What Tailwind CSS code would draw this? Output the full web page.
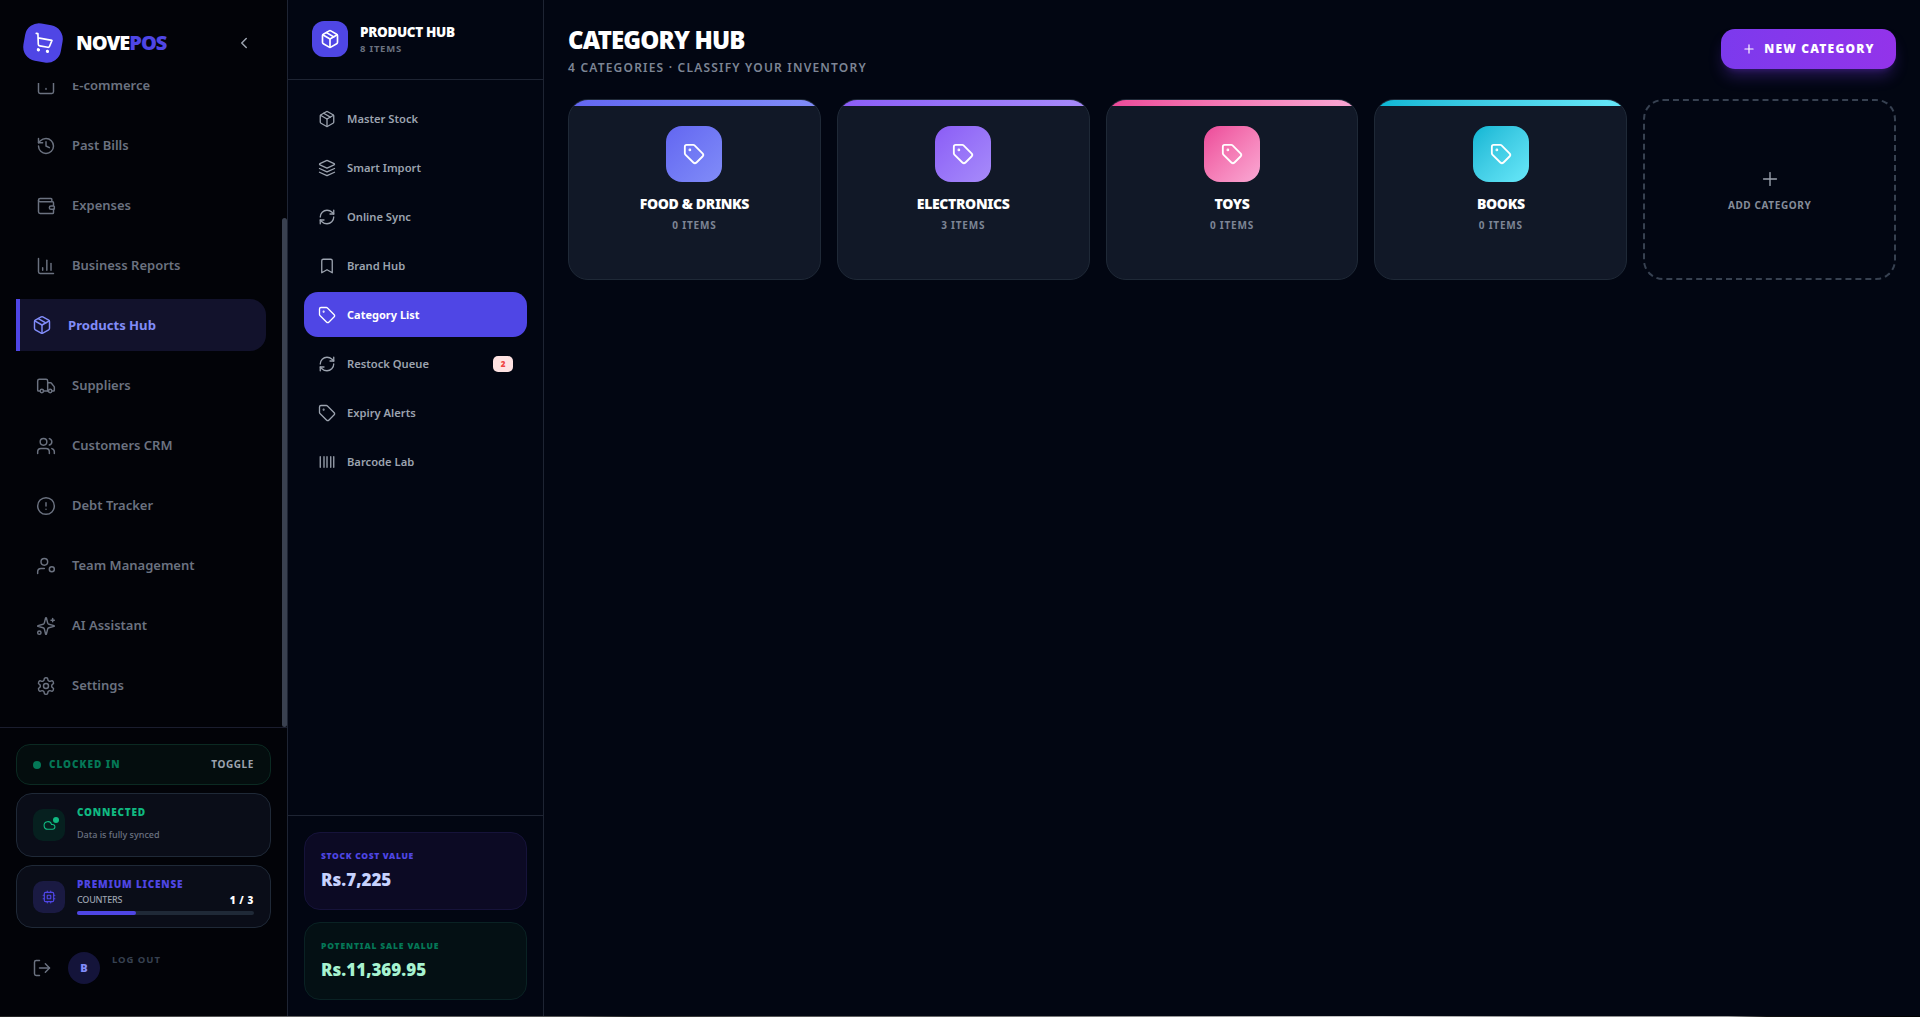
<!DOCTYPE html>
<html lang="en">
<head>
  <meta charset="UTF-8" />
  <title>NovePOS - Category Hub</title>
  <script src="https://cdn.jsdelivr.net/npm/@tailwindcss/browser@4"></script>
</head>
<body class="h-[1017px] overflow-hidden bg-[#020612] font-['Noto_Sans',sans-serif] text-white">
  <!-- icon sprites -->
  <svg class="hidden" xmlns="http://www.w3.org/2000/svg">
    <symbol id="i-cart" viewBox="0 0 24 24"><circle cx="8" cy="21" r="1"/><circle cx="19" cy="21" r="1"/><path d="M2.05 2.05h2l2.66 12.42a2 2 0 0 0 2 1.58h9.78a2 2 0 0 0 1.95-1.57l1.65-7.43H5.12"/></symbol>
    <symbol id="i-chevron" viewBox="0 0 24 24"><path d="m15 18-6-6 6-6"/></symbol>
    <symbol id="i-monitor" viewBox="0 0 24 24"><rect x="3" y="3" width="18" height="18" rx="2"/><path d="M12 16v-1"/></symbol>
    <symbol id="i-history" viewBox="0 0 24 24"><path d="M3 12a9 9 0 1 0 9-9 9.75 9.75 0 0 0-6.74 2.74L3 8"/><path d="M3 3v5h5"/><path d="M12 7v5l4 2"/></symbol>
    <symbol id="i-wallet" viewBox="0 0 24 24"><path d="M19 7V4a1 1 0 0 0-1-1H5a2 2 0 0 0 0 4h15a1 1 0 0 1 1 1v4h-3a2 2 0 0 0 0 4h3a1 1 0 0 0 1-1v-2a1 1 0 0 0-1-1"/><path d="M3 5v14a2 2 0 0 0 2 2h15a1 1 0 0 0 1-1v-4"/></symbol>
    <symbol id="i-chart" viewBox="0 0 24 24"><path d="M3 3v16a2 2 0 0 0 2 2h16"/><path d="M18 17V9"/><path d="M13 17V5"/><path d="M8 17v-3"/></symbol>
    <symbol id="i-package" viewBox="0 0 24 24"><path d="m7.5 4.27 9 5.15"/><path d="M21 8a2 2 0 0 0-1-1.73l-7-4a2 2 0 0 0-2 0l-7 4A2 2 0 0 0 3 8v8a2 2 0 0 0 1 1.73l7 4a2 2 0 0 0 2 0l7-4A2 2 0 0 0 21 16Z"/><path d="m3.3 7 8.7 5 8.7-5"/><path d="M12 22V12"/></symbol>
    <symbol id="i-truck" viewBox="0 0 24 24"><path d="M14 18V6a2 2 0 0 0-2-2H4a2 2 0 0 0-2 2v11a1 1 0 0 0 1 1h2"/><path d="M15 18H9"/><path d="M19 18h2a1 1 0 0 0 1-1v-3.65a1 1 0 0 0-.22-.624l-3.48-4.35A1 1 0 0 0 17.52 8H14"/><circle cx="17" cy="18" r="2"/><circle cx="7" cy="18" r="2"/></symbol>
    <symbol id="i-users" viewBox="0 0 24 24"><path d="M16 21v-2a4 4 0 0 0-4-4H6a4 4 0 0 0-4 4v2"/><circle cx="9" cy="7" r="4"/><path d="M22 21v-2a4 4 0 0 0-3-3.87"/><path d="M16 3.13a4 4 0 0 1 0 7.75"/></symbol>
    <symbol id="i-alert" viewBox="0 0 24 24"><circle cx="12" cy="12" r="10"/><path d="M12 8v4"/><path d="M12 16h.01"/></symbol>
    <symbol id="i-usercog" viewBox="0 0 24 24"><path d="M10 15H6a4 4 0 0 0-4 4v2"/><circle cx="10" cy="7" r="4"/><circle cx="19" cy="16" r="3"/></symbol>
    <symbol id="i-sparkles" viewBox="0 0 24 24"><path d="M9.937 15.5A2 2 0 0 0 8.5 14.063l-6.135-1.582a.5.5 0 0 1 0-.962L8.5 9.936A2 2 0 0 0 9.937 8.5l1.582-6.135a.5.5 0 0 1 .963 0L14.063 8.5A2 2 0 0 0 15.5 9.937l6.135 1.581a.5.5 0 0 1 0 .964L15.5 14.063a2 2 0 0 0-1.437 1.437l-1.582 6.135a.5.5 0 0 1-.963 0z"/><path d="M20 3v4"/><path d="M22 5h-4"/><circle cx="4" cy="20" r="2"/></symbol>
    <symbol id="i-settings" viewBox="0 0 24 24"><path d="M12.22 2h-.44a2 2 0 0 0-2 2v.18a2 2 0 0 1-1 1.73l-.43.25a2 2 0 0 1-2 0l-.15-.08a2 2 0 0 0-2.73.73l-.22.38a2 2 0 0 0 .73 2.73l.15.1a2 2 0 0 1 1 1.72v.51a2 2 0 0 1-1 1.74l-.15.09a2 2 0 0 0-.73 2.73l.22.38a2 2 0 0 0 2.73.73l.15-.08a2 2 0 0 1 2 0l.43.25a2 2 0 0 1 1 1.73V20a2 2 0 0 0 2 2h.44a2 2 0 0 0 2-2v-.18a2 2 0 0 1 1-1.73l.43-.25a2 2 0 0 1 2 0l.15.08a2 2 0 0 0 2.73-.73l.22-.39a2 2 0 0 0-.73-2.73l-.15-.08a2 2 0 0 1-1-1.74v-.5a2 2 0 0 1 1-1.74l.15-.09a2 2 0 0 0 .73-2.73l-.22-.38a2 2 0 0 0-2.73-.73l-.15.08a2 2 0 0 1-2 0l-.43-.25a2 2 0 0 1-1-1.73V4a2 2 0 0 0-2-2z"/><circle cx="12" cy="12" r="3"/></symbol>
    <symbol id="i-cloud" viewBox="0 0 24 24"><path d="M17.5 19H9a7 7 0 1 1 6.71-9h1.79a4.5 4.5 0 1 1 0 9Z"/></symbol>
    <symbol id="i-cpu" viewBox="0 0 24 24"><rect x="4" y="4" width="16" height="16" rx="2"/><rect x="9" y="9" width="6" height="6" rx="1"/><path d="M15 2v2M15 20v2M2 15h2M2 9h2M20 15h2M20 9h2M9 2v2M9 20v2"/></symbol>
    <symbol id="i-logout" viewBox="0 0 24 24"><path d="M9 21H5a2 2 0 0 1-2-2V5a2 2 0 0 1 2-2h4"/><path d="m16 17 5-5-5-5"/><path d="M21 12H9"/></symbol>
    <symbol id="i-layers" viewBox="0 0 24 24"><path d="M12.83 2.18a2 2 0 0 0-1.66 0L2.6 6.08a1 1 0 0 0 0 1.83l8.58 3.91a2 2 0 0 0 1.66 0l8.58-3.9a1 1 0 0 0 0-1.83Z"/><path d="m22 17.65-9.17 4.16a2 2 0 0 1-1.66 0L2 17.65"/><path d="m22 12.65-9.17 4.16a2 2 0 0 1-1.66 0L2 12.65"/></symbol>
    <symbol id="i-refresh" viewBox="0 0 24 24"><path d="M3 12a9 9 0 0 1 9-9 9.75 9.75 0 0 1 6.74 2.74L21 8"/><path d="M21 3v5h-5"/><path d="M21 12a9 9 0 0 1-9 9 9.75 9.75 0 0 1-6.74-2.74L3 16"/><path d="M8 16H3v5"/></symbol>
    <symbol id="i-bookmark" viewBox="0 0 24 24"><path d="m19 21-7-4-7 4V5a2 2 0 0 1 2-2h10a2 2 0 0 1 2 2v16z"/></symbol>
    <symbol id="i-tag" viewBox="0 0 24 24"><path d="M12.586 2.586A2 2 0 0 0 11.172 2H4a2 2 0 0 0-2 2v7.172a2 2 0 0 0 .586 1.414l8.704 8.704a2.426 2.426 0 0 0 3.42 0l6.58-6.58a2.426 2.426 0 0 0 0-3.42z"/><circle cx="7.5" cy="7.5" r=".5" fill="currentColor"/></symbol>
    <symbol id="i-barcode" viewBox="0 0 24 24"><path d="M3 5v14M8 5v14M12 5v14M17 5v14M21 5v14"/></symbol>
    <symbol id="i-plus" viewBox="0 0 24 24"><path d="M5 12h14"/><path d="M12 5v14"/></symbol>
  </svg>

  <div class="flex h-[1016px]">
    <!-- Main sidebar -->
    <aside class="flex w-[288px] shrink-0 flex-col border-r border-[#1e2433] bg-[#020308]">
      <header class="flex h-[83px] shrink-0 items-start pl-[24px] pr-[34px] pt-[24px]">
        <div class="flex size-[38px] rotate-[10deg] items-center justify-center rounded-[14px] bg-[#4f46e5]">
          <svg class="size-[20px] fill-none stroke-white stroke-2 [stroke-linecap:round] [stroke-linejoin:round]"><use href="#i-cart"/></svg>
        </div>
        <span class="ml-[14px] text-[20px] font-black leading-[38px] tracking-tighter text-white">NOVE<span class="text-[#4f46e5]">POS</span></span>
        <svg class="ml-auto mt-[10px] size-[18px] fill-none stroke-[#9ca3af] stroke-2 [stroke-linecap:round] [stroke-linejoin:round]"><use href="#i-chevron"/></svg>
      </header>

      <!-- scrolled nav -->
      <div class="relative h-[644px] shrink-0 overflow-hidden">
        <div class="absolute left-[282px] top-[135px] h-[509px] w-[5px] rounded-full bg-[#3a4150]"></div>
        <nav class="-mt-[28px] flex flex-col text-[13px] font-semibold text-[#6b7280] [&>a]:pt-[1px]">
          <a class="flex h-[60px] items-center gap-[16px] pl-[36px]"><svg class="size-[20px] shrink-0 fill-none stroke-current stroke-[1.75] [stroke-linecap:round] [stroke-linejoin:round]"><use href="#i-monitor"/></svg>E-commerce</a>
          <a class="flex h-[60px] items-center gap-[16px] pl-[36px]"><svg class="size-[20px] shrink-0 fill-none stroke-current stroke-[1.75] [stroke-linecap:round] [stroke-linejoin:round]"><use href="#i-history"/></svg>Past Bills</a>
          <a class="flex h-[60px] items-center gap-[16px] pl-[36px]"><svg class="size-[20px] shrink-0 fill-none stroke-current stroke-[1.75] [stroke-linecap:round] [stroke-linejoin:round]"><use href="#i-wallet"/></svg>Expenses</a>
          <a class="flex h-[60px] items-center gap-[16px] pl-[36px]"><svg class="size-[20px] shrink-0 fill-none stroke-current stroke-[1.75] [stroke-linecap:round] [stroke-linejoin:round]"><use href="#i-chart"/></svg>Business Reports</a>
          <div class="flex h-[60px] items-center">
            <span class="ml-[16px] flex h-[52px] w-[250px] items-center gap-[16px] rounded-r-[16px] border-l-4 border-[#4f46e5] bg-[#12122c] pl-[12px] text-[#818cf8]"><svg class="size-[20px] shrink-0 fill-none stroke-current stroke-[1.75] [stroke-linecap:round] [stroke-linejoin:round]"><use href="#i-package"/></svg><span class="pt-[1px] text-[13.1px] font-bold">Products Hub</span></span>
          </div>
          <a class="flex h-[60px] items-center gap-[16px] pl-[36px]"><svg class="size-[20px] shrink-0 fill-none stroke-current stroke-[1.75] [stroke-linecap:round] [stroke-linejoin:round]"><use href="#i-truck"/></svg>Suppliers</a>
          <a class="flex h-[60px] items-center gap-[16px] pl-[36px]"><svg class="size-[20px] shrink-0 fill-none stroke-current stroke-[1.75] [stroke-linecap:round] [stroke-linejoin:round]"><use href="#i-users"/></svg>Customers CRM</a>
          <a class="flex h-[60px] items-center gap-[16px] pl-[36px]"><svg class="size-[20px] shrink-0 fill-none stroke-current stroke-[1.75] [stroke-linecap:round] [stroke-linejoin:round]"><use href="#i-alert"/></svg>Debt Tracker</a>
          <a class="flex h-[60px] items-center gap-[16px] pl-[36px]"><svg class="size-[20px] shrink-0 fill-none stroke-current stroke-[1.75] [stroke-linecap:round] [stroke-linejoin:round]"><use href="#i-usercog"/></svg>Team Management</a>
          <a class="flex h-[60px] items-center gap-[16px] pl-[36px]"><svg class="size-[20px] shrink-0 fill-none stroke-current stroke-[1.75] [stroke-linecap:round] [stroke-linejoin:round]"><use href="#i-sparkles"/></svg>AI Assistant</a>
          <a class="flex h-[60px] items-center gap-[16px] pl-[36px]"><svg class="size-[20px] shrink-0 fill-none stroke-current stroke-[1.75] [stroke-linecap:round] [stroke-linejoin:round]"><use href="#i-settings"/></svg>Settings</a>
        </nav>
      </div>

      <!-- sidebar footer -->
      <div class="flex flex-1 flex-col border-t border-[#1a1d2e] px-4 pt-4">
        <div class="flex h-[41px] items-center rounded-[14px] border border-[#0b2a22] bg-[#040d0e] px-[16px] text-[10px] font-black tracking-[0.1em]">
          <span class="size-[8px] rounded-full bg-[#047857]"></span>
          <span class="ml-[8px] text-[#047857]">CLOCKED IN</span>
          <span class="ml-auto font-bold tracking-[0.06em] text-[#9ca3af]">TOGGLE</span>
        </div>
        <div class="mt-[8px] flex h-[64px] items-center rounded-[16px] border border-[#1f2937] bg-[#0a0d18] px-[16px]">
          <div class="relative flex size-[32px] items-center justify-center rounded-[10px] bg-[#06201f]">
            <svg class="size-[13px] fill-none stroke-[#10b981] stroke-2"><use href="#i-cloud"/></svg>
            <span class="absolute right-[6px] top-[8px] size-[6px] rounded-full bg-[#10b981]"></span>
          </div>
          <div class="-mt-[4px] ml-[12px] flex flex-col gap-[11px]">
            <span class="text-[10px] font-black leading-[12px] tracking-[0.08em] text-[#10b981]">CONNECTED</span>
            <span class="text-[9px] font-medium leading-[12px] text-[#6b7280]">Data is fully synced</span>
          </div>
        </div>
        <div class="mt-[8px] flex h-[63px] items-center rounded-[16px] border border-[#1f2937] bg-[#0a0d18] px-[16px]">
          <div class="flex size-[32px] shrink-0 items-center justify-center rounded-[10px] bg-[#1a1a42]">
            <svg class="size-[14px] fill-none stroke-[#4f46e5] stroke-2 [stroke-linecap:round]"><use href="#i-cpu"/></svg>
          </div>
          <div class="ml-[12px] flex flex-1 flex-col">
            <span class="-mt-[1px] text-[10px] font-black leading-[12px] tracking-[0.08em] text-[#4f46e5]">PREMIUM LICENSE</span>
            <div class="mt-[4px] flex items-center justify-between text-[9px] leading-[12px]">
              <span class="font-medium tracking-tight text-[#9ca3af]">COUNTERS</span>
              <span class="text-[10px] font-black tracking-[0.06em] text-white">1 / 3</span>
            </div>
            <div class="mt-[5px] h-[4px] rounded-full bg-[#1f2937]"><div class="h-full w-1/3 rounded-full bg-[#4f46e5]"></div></div>
          </div>
        </div>
        <div class="mt-[24px] flex items-start pl-[16px]">
          <svg class="mt-[6px] size-[20px] fill-none stroke-[#6b7280] stroke-[1.75] [stroke-linecap:round] [stroke-linejoin:round]"><use href="#i-logout"/></svg>
          <div class="ml-[16px] flex size-[32px] items-center justify-center rounded-full bg-[#14143a] text-[11px] font-black text-[#818cf8]">B</div>
          <span class="ml-[12px] mt-[1px] text-[9.5px] font-bold tracking-[0.1em] text-[#374151]">LOG OUT</span>
        </div>
      </div>
    </aside>

    <!-- Products sub sidebar -->
    <aside class="flex w-[256px] shrink-0 flex-col border-r border-[#1e2433]">
      <header class="flex h-[80px] shrink-0 items-center border-b border-[#1e2433] pl-6 pb-[1px]">
        <div class="flex size-[36px] items-center justify-center rounded-[12px] bg-[#4f46e5]">
          <svg class="size-[20px] fill-none stroke-white stroke-2 [stroke-linecap:round] [stroke-linejoin:round]"><use href="#i-package"/></svg>
        </div>
        <div class="ml-[12px] flex flex-col">
          <span class="text-[13.5px] font-black leading-[18px] tracking-tight text-white">PRODUCT HUB</span>
          <span class="mt-[2px] text-[9.5px] font-bold leading-[12px] tracking-[0.08em] text-[#6b7280]">8 ITEMS</span>
        </div>
      </header>
      <nav class="flex flex-1 flex-col gap-[4px] px-4 pt-[16px] text-[11.2px] font-semibold text-[#9ca3af] [&>a]:pt-[2px] [&>a>svg]:-translate-y-px">
        <a class="flex h-[45px] items-center gap-[11px] rounded-[14px] pl-[14px]"><svg class="size-[18px] shrink-0 fill-none stroke-current stroke-[1.75] [stroke-linecap:round] [stroke-linejoin:round]"><use href="#i-package"/></svg>Master Stock</a>
        <a class="flex h-[45px] items-center gap-[11px] rounded-[14px] pl-[14px]"><svg class="size-[18px] shrink-0 fill-none stroke-current stroke-[1.75] [stroke-linecap:round] [stroke-linejoin:round]"><use href="#i-layers"/></svg>Smart Import</a>
        <a class="flex h-[45px] items-center gap-[11px] rounded-[14px] pl-[14px]"><svg class="size-[18px] shrink-0 fill-none stroke-current stroke-[1.75] [stroke-linecap:round] [stroke-linejoin:round]"><use href="#i-refresh"/></svg>Online Sync</a>
        <a class="flex h-[45px] items-center gap-[11px] rounded-[14px] pl-[14px]"><svg class="size-[18px] shrink-0 fill-none stroke-current stroke-[1.75] [stroke-linecap:round] [stroke-linejoin:round]"><use href="#i-bookmark"/></svg>Brand Hub</a>
        <a class="flex h-[45px] items-center gap-[11px] rounded-[14px] bg-[#4f46e5] pl-[14px] text-white"><svg class="size-[18px] shrink-0 fill-none stroke-current stroke-[1.75] [stroke-linecap:round] [stroke-linejoin:round]"><use href="#i-tag"/></svg><span class="text-[11px] font-bold">Category List</span></a>
        <a class="flex h-[45px] items-center gap-[11px] rounded-[14px] pl-[14px] pr-[14px]"><svg class="size-[18px] shrink-0 fill-none stroke-current stroke-[1.75] [stroke-linecap:round] [stroke-linejoin:round]"><use href="#i-refresh"/></svg>Restock Queue<span class="ml-auto flex h-[16px] w-[20px] -translate-y-px items-center justify-center rounded-[5px] bg-[#fee2e2] text-[8px] font-black text-[#ef4444]">2</span></a>
        <a class="flex h-[45px] items-center gap-[11px] rounded-[14px] pl-[14px]"><svg class="size-[18px] shrink-0 fill-none stroke-current stroke-[1.75] [stroke-linecap:round] [stroke-linejoin:round]"><use href="#i-tag"/></svg>Expiry Alerts</a>
        <a class="flex h-[45px] items-center gap-[11px] rounded-[14px] pl-[14px]"><svg class="size-[18px] shrink-0 fill-none stroke-current stroke-[1.75] [stroke-linecap:round] [stroke-linejoin:round]"><use href="#i-barcode"/></svg>Barcode Lab</a>
      </nav>
      <div class="flex flex-col gap-[12px] border-t border-[#1e2433] px-4 pb-[16px] pt-[16px]">
        <div class="flex h-[78px] flex-col justify-center rounded-[16px] border border-[#16133a] bg-[#0c0a24] px-[16px]">
          <span class="-mt-[1px] text-[8.5px] font-black leading-[12px] tracking-[0.08em] text-[#4f46e5]">STOCK COST VALUE</span>
          <span class="mt-[6px] text-[17px] font-black leading-[24px] text-[#c7d2fe]">Rs.7,225</span>
        </div>
        <div class="flex h-[78px] flex-col justify-center rounded-[16px] border border-[#0a2224] bg-[#041014] px-[16px]">
          <span class="-mt-[1px] text-[8.5px] font-black leading-[12px] tracking-[0.1em] text-[#047857]">POTENTIAL SALE VALUE</span>
          <span class="mt-[6px] text-[17px] font-black leading-[24px] text-[#a7f3d0]">Rs.11,369.95</span>
        </div>
      </div>
    </aside>

    <!-- Main -->
    <main class="flex-1 px-6 pt-[24px]">
      <div class="flex items-start justify-between">
        <div>
          <h1 class="text-[24px] font-black leading-[32px] tracking-[-0.035em] text-white">CATEGORY HUB</h1>
          <p class="mt-[4px] text-[12px] font-semibold leading-[16px] tracking-[0.1em] text-[#7d8595]">4 CATEGORIES · CLASSIFY YOUR INVENTORY</p>
        </div>
        <button class="mt-[5px] flex h-[40px] w-[175px] items-center justify-center gap-[8px] rounded-[14px] bg-gradient-to-r from-[#7c3aed] to-[#9333ea] text-[12px] font-black tracking-[0.1em] text-white shadow-lg shadow-[#7c3aed]/30">
          <svg class="size-[14px] fill-none stroke-current stroke-2 [stroke-linecap:round]"><use href="#i-plus"/></svg>NEW CATEGORY
        </button>
      </div>
      <div class="mt-[23px] grid grid-cols-5 gap-4">
        <div class="h-[181px] overflow-hidden rounded-[20px] border border-[#1f2937] bg-[#111827] text-center">
          <div class="h-[6px] bg-gradient-to-r from-[#6366f1] to-[#818cf8]"></div>
          <div class="mx-auto mt-[20px] flex size-[56px] items-center justify-center rounded-[16px] bg-gradient-to-br from-[#6366f1] to-[#818cf8]"><svg class="size-[22px] fill-none stroke-white stroke-2 [stroke-linecap:round] [stroke-linejoin:round]"><use href="#i-tag"/></svg></div>
          <p class="mt-[12px] text-[14px] font-black leading-[20px] tracking-tight text-white">FOOD &amp; DRINKS</p>
          <p class="mt-[4px] text-[10px] font-bold leading-[14px] tracking-[0.08em] text-[#7d8595]">0 ITEMS</p>
        </div>
        <div class="h-[181px] overflow-hidden rounded-[20px] border border-[#1f2937] bg-[#111827] text-center">
          <div class="h-[6px] bg-gradient-to-r from-[#8b5cf6] to-[#a78bfa]"></div>
          <div class="mx-auto mt-[20px] flex size-[56px] items-center justify-center rounded-[16px] bg-gradient-to-br from-[#8b5cf6] to-[#a78bfa]"><svg class="size-[22px] fill-none stroke-white stroke-2 [stroke-linecap:round] [stroke-linejoin:round]"><use href="#i-tag"/></svg></div>
          <p class="mt-[12px] text-[14px] font-black leading-[20px] tracking-tight text-white">ELECTRONICS</p>
          <p class="mt-[4px] text-[10px] font-bold leading-[14px] tracking-[0.08em] text-[#7d8595]">3 ITEMS</p>
        </div>
        <div class="h-[181px] overflow-hidden rounded-[20px] border border-[#1f2937] bg-[#111827] text-center">
          <div class="h-[6px] bg-gradient-to-r from-[#ec4899] to-[#f9a8d4]"></div>
          <div class="mx-auto mt-[20px] flex size-[56px] items-center justify-center rounded-[16px] bg-gradient-to-br from-[#ec4899] to-[#f9a8d4]"><svg class="size-[22px] fill-none stroke-white stroke-2 [stroke-linecap:round] [stroke-linejoin:round]"><use href="#i-tag"/></svg></div>
          <p class="mt-[12px] text-[14px] font-black leading-[20px] tracking-tight text-white">TOYS</p>
          <p class="mt-[4px] text-[10px] font-bold leading-[14px] tracking-[0.08em] text-[#7d8595]">0 ITEMS</p>
        </div>
        <div class="h-[181px] overflow-hidden rounded-[20px] border border-[#1f2937] bg-[#111827] text-center">
          <div class="h-[6px] bg-gradient-to-r from-[#06b6d4] to-[#67e8f9]"></div>
          <div class="mx-auto mt-[20px] flex size-[56px] items-center justify-center rounded-[16px] bg-gradient-to-br from-[#06b6d4] to-[#67e8f9]"><svg class="size-[22px] fill-none stroke-white stroke-2 [stroke-linecap:round] [stroke-linejoin:round]"><use href="#i-tag"/></svg></div>
          <p class="mt-[12px] text-[14px] font-black leading-[20px] tracking-tight text-white">BOOKS</p>
          <p class="mt-[4px] text-[10px] font-bold leading-[14px] tracking-[0.08em] text-[#7d8595]">0 ITEMS</p>
        </div>
        <button class="flex h-[181px] flex-col items-center justify-center rounded-[20px] border-2 border-dashed border-[#374151]">
          <svg class="size-[22px] fill-none stroke-[#9ca3af] stroke-[1.5] [stroke-linecap:round]"><use href="#i-plus"/></svg>
          <span class="mt-[8px] text-[10px] font-bold leading-[14px] tracking-[0.06em] text-[#858c99]">ADD CATEGORY</span>
        </button>
      </div>
    </main>
  </div>
  <div class="h-px bg-[linear-gradient(90deg,#222_0,#666_15%,#555_30%,#222_33%,#555_40%,#777_55%,#ccc_72%,#888_80%,#999_90%,#111_92%,#000_100%)]"></div>
</body>
</html>
